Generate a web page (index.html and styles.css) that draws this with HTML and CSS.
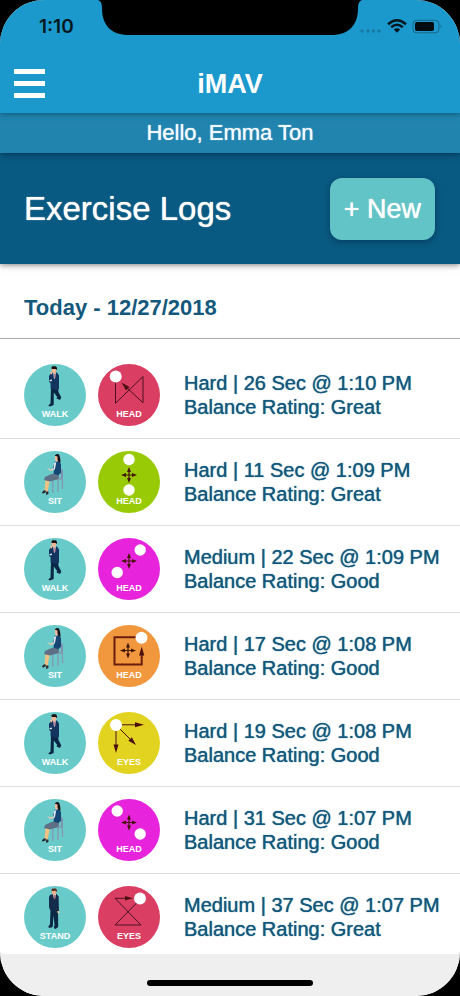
FILE: index.html
```html
<!DOCTYPE html>
<html lang="en">
<head>
<meta charset="utf-8">
<meta name="viewport" content="width=device-width, initial-scale=1">
<title>iMAV</title>
<link rel="stylesheet" href="styles.css">
</head>
<body>
<svg class="sprite" aria-hidden="true">
  <defs>
    <symbol id="cross" viewBox="0 0 16 16">
      <path d="M8 3V13M3 8H13" stroke="#451508" stroke-width="1.2"/>
      <path d="M8 0l2 5H6zM8 16l2-5H6zM0 8l5-2v4zM16 8l-5-2v4z" fill="#451508"/>
    </symbol>
    <symbol id="walk" viewBox="0 0 62 62">
      <path d="M27 22L34 22L34.5 28L37.3 33.5L36 36L32.5 34.5L33.2 33L29.8 28.5L29.7 41L26 42.5L24.2 41.5L26.5 39.5z" fill="#0a2745"/>
      <path d="M26.5 9.5L29 8.5H33L35 11.5L35 25L32 26L26.6 24.5L26.5 19L25 18L25 12z" fill="#12345f"/>
      <path d="M29.2 8.5L32 8.5L31.2 14L30 15z" fill="#e7e9ee"/>
      <path d="M30.4 9.5l.9 0l.1 4l-.8 1z" fill="#8c2639"/>
      <path d="M27.6 3.6H32.3V7L31 9.3H29L27.6 7z" fill="#efb795"/>
      <path d="M27.2 4L28.3 2.2L32 2.2L33 4V6L31.5 5L28 5z" fill="#17100e"/>
      <path d="M26 8.5l1.6-1 .8 2-1.5 1.2z" fill="#f0bf9b"/>
      <path d="M25.5 16l2.2-.6.3 1.5-2.3.7z" fill="#d8eeee"/>
    </symbol>
    <symbol id="sit" viewBox="0 0 62 62">
      <path d="M38 18L38.6 38M36 28H28.8V42M34 28V41M30 28H38.5" fill="none" stroke="#8797b0" stroke-width="1.3"/>
      <path d="M37.2 18q2.6 2 1.600 9l-2 1z" fill="#7e91af"/>
      <path d="M21.500 28L26 29L23.500 41L20.500 40.500z" fill="#efc183"/>
      <path d="M19 40l2.300-1 .7 2.200-2.800 1.200L17.800 42zM22.200 40.500l2.200 0v2.400l-2.400 1z" fill="#292a36"/>
      <path d="M27.500 23L35.500 22L34.500 28L26 30.500L20 29L21 26z" fill="#5e7085"/>
      <path d="M30.500 11L34.500 10L37 13L37 22L34 24L29.500 22.800L30 18L28.800 16.500z" fill="#154674"/>
      <path d="M29.800 12L32.300 11L31 18L29.400 20z" fill="#dfe5ee"/>
      <path d="M23 16.800L26.500 18.500L29 17.500L29 19.300L26.500 20L24.200 18.200z" fill="#edc6ae"/>
      <path d="M31 4H34.400V9L32.500 11L31 9z" fill="#f0b99a"/>
      <path d="M30.700 4.800Q32 2.200 34.700 3.200Q36.500 6 36.500 12L34.700 11L33.500 8.500V5.500z" fill="#17111a"/>
    </symbol>
    <symbol id="stand" viewBox="0 0 62 62">
      <path d="M26.500 22H34L34.200 41L31.500 43L29.800 42L30.500 39L29.600 29L28.700 41L25.500 42L24.200 41L26 38z" fill="#0a2743"/>
      <path d="M26 9L29 8H32.500L34.600 10.500L35 25L32.500 26L26 24L25 21V11z" fill="#142c4b"/>
      <path d="M29 8H32L31 13.500L29.800 12z" fill="#f2f1f4"/>
      <path d="M30.300 9h1l-.2 4-.7 1z" fill="#8c2639"/>
      <path d="M27.800 3.500H32.300V6.800L31 8.800H29L27.800 7z" fill="#e8ae89"/>
      <path d="M27.200 4L28.500 2.500H32L33 4.200L32.600 6L31.500 4.800L28 5z" fill="#582b20"/>
      <path d="M33.300 25h1.800v2.300h-1.500z" fill="#efc397"/>
    </symbol>
  </defs>
</svg>

<div class="screen">
  <header class="topbar">
    <svg class="notch" viewBox="0 0 264 35" aria-hidden="true"><path d="M0 0Q4 1 4 8C4 25 13 35 31 35H233C251 35 260 25 260 8Q260 1 264 0z"/></svg>
    <div class="status">
      <span class="time">1:10</span>
      <svg width="84" height="18" viewBox="0 0 84 18" aria-hidden="true">
        <g fill="#1879a2"><circle cx="3" cy="13" r="1.7"/><circle cx="9" cy="13" r="1.7"/><circle cx="14.5" cy="13" r="1.7"/><circle cx="20" cy="13" r="1.7"/></g>
        <g fill="none" stroke="#051820" stroke-width="2.5"><path d="M29 6.2Q38 -1.8 47 6.2"/><path d="M32.2 9.3Q38 4.3 43.8 9.3"/></g>
        <path d="M34.8 11.6Q38 9 41.2 11.6L38 14.8z" fill="#051820"/>
        <rect x="54" y="2.3" width="26" height="12.5" rx="3.5" fill="none" stroke="#14678a"/>
        <rect x="56" y="4" width="19" height="9" rx="1.8" fill="#020c10"/>
        <path d="M81.5 6.5q2 2 0 4z" fill="#14678a"/>
      </svg>
    </div>
    <nav class="nav">
      <button class="menu" type="button" aria-label="Menu"><i></i><i></i><i></i></button>
      <h1>iMAV</h1>
    </nav>
  </header>
  <p class="hello">Hello, Emma Ton</p>
  <section class="heading">
    <h2>Exercise Logs</h2>
    <button class="new" type="button">+ New</button>
  </section>
  <main>
    <h3>Today - 12/27/2018</h3>
    <ul class="logs">
      <li>
        <svg class="badge" viewBox="0 0 62 62"><use href="#walk"/><text x="31" y="53">WALK</text></svg>
        <svg class="badge red" viewBox="0 0 62 62"><path class="line" d="M17.5 17V39.3L45 12.5V38.8L27 22"/><path class="tip" d="M23.5 18.5L31.5 23L28 26.5z"/><circle cx="17.7" cy="12.5" r="6"/><text x="31" y="53">HEAD</text></svg>
        <p>Hard | 26 Sec @ 1:10 PM<br>Balance Rating: Great</p>
      </li>
      <li>
        <svg class="badge" viewBox="0 0 62 62"><use href="#sit"/><text x="31" y="53">SIT</text></svg>
        <svg class="badge green" viewBox="0 0 62 62"><use href="#cross" x="23" y="16" width="16" height="16"/><circle cx="31" cy="8.5" r="5.7"/><circle cx="31" cy="39" r="5.7"/><text x="31" y="53">HEAD</text></svg>
        <p>Hard | 11 Sec @ 1:09 PM<br>Balance Rating: Great</p>
      </li>
      <li>
        <svg class="badge" viewBox="0 0 62 62"><use href="#walk"/><text x="31" y="53">WALK</text></svg>
        <svg class="badge pink" viewBox="0 0 62 62"><use href="#cross" x="23" y="15" width="16" height="16"/><circle cx="42.2" cy="12" r="5.7"/><circle cx="19.2" cy="34.5" r="5.7"/><text x="31" y="53">HEAD</text></svg>
        <p>Medium | 22 Sec @ 1:09 PM<br>Balance Rating: Good</p>
      </li>
      <li>
        <svg class="badge" viewBox="0 0 62 62"><use href="#sit"/><text x="31" y="53">SIT</text></svg>
        <svg class="badge orange" viewBox="0 0 62 62"><use href="#cross" x="22" y="17.5" width="16" height="16"/><path class="line bold" d="M38 12.3H16.5V39.5H43.7V28"/><path class="tip" d="M43.7 21.5L46.3 30.5H41.1z"/><circle cx="43.5" cy="12.7" r="6"/><text x="31" y="53">HEAD</text></svg>
        <p>Hard | 17 Sec @ 1:08 PM<br>Balance Rating: Good</p>
      </li>
      <li>
        <svg class="badge" viewBox="0 0 62 62"><use href="#walk"/><text x="31" y="53">WALK</text></svg>
        <svg class="badge yellow" viewBox="0 0 62 62"><path class="line" d="M24 12.8H38M22 17L33 28M18 19V33"/><path class="tip" d="M46 12.8L37 15.3V10.3zM38 33L30.3 28.8L33.8 25.3zM18 41L20.5 32.5H15.5z"/><circle cx="18" cy="13" r="6"/><text x="31" y="53">EYES</text></svg>
        <p>Hard | 19 Sec @ 1:08 PM<br>Balance Rating: Good</p>
      </li>
      <li>
        <svg class="badge" viewBox="0 0 62 62"><use href="#sit"/><text x="31" y="53">SIT</text></svg>
        <svg class="badge pink" viewBox="0 0 62 62"><use href="#cross" x="23" y="15.5" width="16" height="16"/><circle cx="19.2" cy="12" r="5.7"/><circle cx="42.2" cy="35" r="5.7"/><text x="31" y="53">HEAD</text></svg>
        <p>Hard | 31 Sec @ 1:07 PM<br>Balance Rating: Good</p>
      </li>
      <li>
        <svg class="badge" viewBox="0 0 62 62"><use href="#stand"/><text x="31" y="53">STAND</text></svg>
        <svg class="badge red" viewBox="0 0 62 62"><path class="line" d="M28 12.3H17L43 39H17L39 16.5"/><path class="tip" d="M35 12.3L27 14.6V10z"/><circle cx="42" cy="12.5" r="6"/><text x="31" y="53">EYES</text></svg>
        <p>Medium | 37 Sec @ 1:07 PM<br>Balance Rating: Great</p>
      </li>
    </ul>
  </main>
  <footer class="bottom"><div class="home"></div></footer>
</div>
</body>
</html>
```
FILE: styles.css
```css
* {
  box-sizing: border-box;
}

body {
  margin: 0;
  background: #000;
  color: #14597c;
  font-family: "Liberation Sans", Arial, sans-serif;
}

h1, h2, h3, p, ul {
  margin: 0;
  padding: 0;
}

button {
  border: 0;
  color: #fff;
  font-family: inherit;
}

.sprite {
  position: absolute;
  width: 0;
  height: 0;
}

.screen {
  display: flex;
  flex-direction: column;
  min-height: 100vh;
  overflow: hidden;
  border-radius: 44px;
  background: #fff;
}

.topbar {
  position: relative;
  z-index: 3;
  background: #1c99cc;
  box-shadow: 0 1px 6px rgba(0, 40, 60, 0.5);
}

.notch {
  position: absolute;
  top: 0;
  left: 50%;
  width: 264px;
  height: 35px;
  transform: translateX(-50%);
}

.status {
  display: flex;
  justify-content: space-between;
  align-items: center;
  height: 54px;
  padding: 0 17px 0 39px;
}

.time {
  color: #051820;
  font: 600 19px/20px Inter, sans-serif;
}

.nav {
  display: grid;
  grid-template-columns: 1fr auto 1fr;
  align-items: center;
  height: 59px;
  padding: 0 14px;
  color: #fff;
}

.nav h1 {
  font-size: 27px;
  line-height: 32px;
}

.menu {
  display: grid;
  gap: 7px;
  justify-self: start;
  width: 31px;
  padding: 0;
  background: none;
}

.menu i {
  height: 5px;
  background: #fff;
}

.hello {
  position: relative;
  z-index: 2;
  background: #2184af;
  box-shadow: 0 1px 6px rgba(0, 20, 50, 0.6);
  color: #f2faff;
  font-size: 22px;
  line-height: 40px;
  text-align: center;
}

.heading {
  position: relative;
  display: flex;
  justify-content: space-between;
  align-items: center;
  height: 111px;
  padding: 0 25px 0 24px;
  background: #095a82;
  box-shadow: 0 1px 6px rgba(0, 0, 0, 0.5);
  color: #fff;
}

.heading h2 {
  font-size: 33px;
  font-weight: 400;
  line-height: 36px;
}

.new {
  padding: 14px;
  border-radius: 12px;
  background: #62c4c6;
  box-shadow: 0 2px 6px rgba(0, 20, 50, 0.4);
  font-size: 27px;
  line-height: 34px;
}

.hello,
.heading h2,
.new,
.logs p {
  text-shadow: 0 0 1px currentColor;
}

main h3 {
  padding: 31px 24px 17px;
  border-bottom: 1px solid #aaa;
  font-size: 22px;
  line-height: 26px;
}

.logs {
  padding-top: 13px;
  list-style: none;
}

.logs li {
  display: flex;
  align-items: center;
  gap: 12px;
  padding: 12px 24px;
  border-bottom: 1px solid #ddd;
}

.logs li:last-child {
  padding-bottom: 6px;
  border-bottom: 0;
}

.logs p {
  margin-left: 12px;
  font-size: 20px;
  line-height: 24px;
  white-space: nowrap;
}

.badge {
  flex: none;
  width: 62px;
  height: 62px;
  border-radius: 50%;
  background: #68cbc9;
  fill: #fff;
}

.badge text {
  font-size: 9px;
  font-weight: 700;
  text-anchor: middle;
}

.badge .line {
  fill: none;
  stroke: #4c1020;
  stroke-width: 1;
}

.badge .bold {
  stroke: #6b1d10;
  stroke-width: 2;
}

.badge .tip {
  fill: #4c1010;
}

.red { background: #da3e63; }
.green { background: #98cb06; }
.pink { background: #e723dc; }
.orange { background: #f1973d; }
.yellow { background: #e3d321; }

.bottom {
  display: flex;
  flex: 1;
  justify-content: center;
  align-items: flex-end;
  min-height: 42px;
  padding-bottom: 10px;
  background: #efefef;
}

.home {
  width: 36%;
  height: 6px;
  border-radius: 3px;
  background: #000;
}
```
